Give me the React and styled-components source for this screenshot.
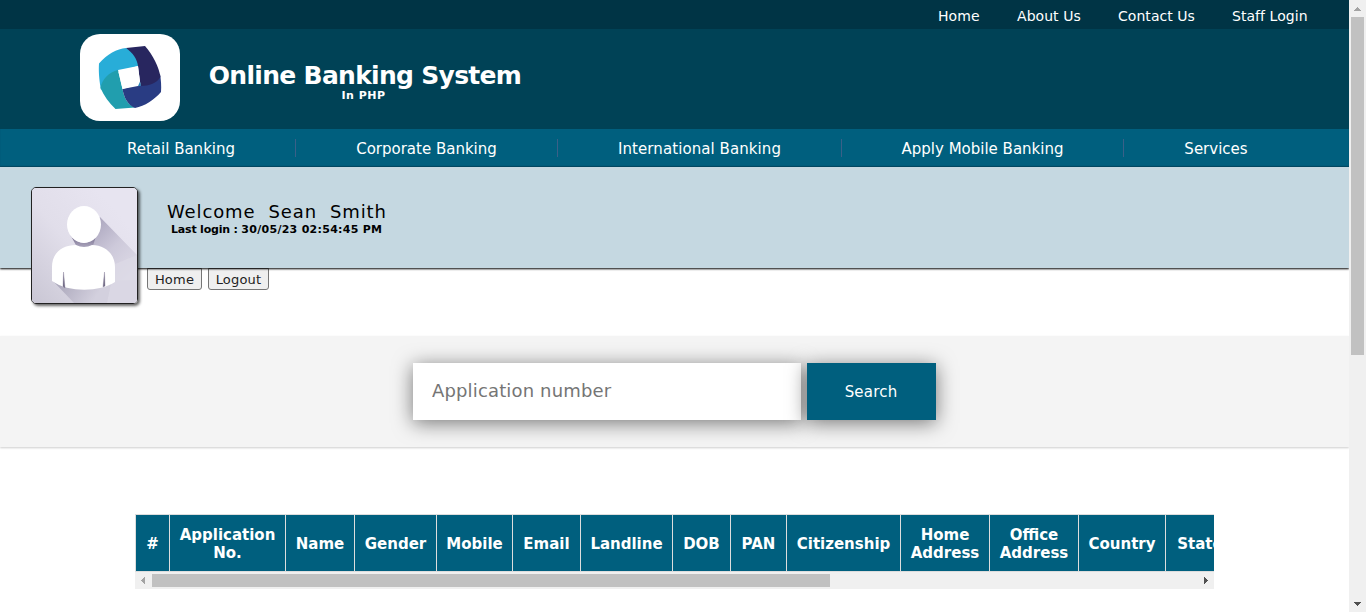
import React from 'react';
import styled, { createGlobalStyle } from 'styled-components';

const GlobalStyle = createGlobalStyle`
  * { box-sizing: border-box; }
  body {
    margin: 0;
    background: #fff;
    font-family: 'DejaVu Sans', Verdana, sans-serif;
    overflow: hidden;
  }
`;

const Shell = styled.div`
  display: flex;
  width: 1366px;
  height: 612px;
`;

const Page = styled.div`
  width: 1349px;
  height: 612px;
  overflow: hidden;
`;

const TopBar = styled.nav`
  display: flex;
  justify-content: flex-end;
  gap: 37px;
  height: 29px;
  padding-right: 41px;
  background: #003445;
`;

const TopLink = styled.a`
  color: #fff;
  font-size: 14px;
  line-height: 32px;
  width: ${(p) => p.$width}px;
  letter-spacing: 0.05px;
  white-space: nowrap;
`;

const Header = styled.header`
  display: flex;
  align-items: flex-start;
  height: 100px;
  padding: 5px 0 0 80px;
  background: #004256;
`;

const LogoTile = styled.div`
  width: 100px;
  height: 87px;
  border-radius: 20px;
  background: #fff;
`;

const Brand = styled.div`
  width: 314px;
  margin: 26px 0 0 28px;
  color: #fff;
  font-weight: bold;
  text-align: center;
`;

const BrandName = styled.div`
  font-size: 25px;
  line-height: 31px;
  letter-spacing: -0.7px;
  white-space: nowrap;
`;

const BrandSub = styled.div`
  padding-right: 3px;
  font-size: 11px;
  line-height: 10px;
  letter-spacing: 0.5px;
`;

const MainNav = styled.nav`
  display: flex;
  align-items: flex-start;
  height: 38px;
  padding: 10px 0 0 67px;
  background: #005f7e;
  box-shadow: inset 0 -1px 1px #004c68;
`;

const NavItem = styled.a`
  width: ${(p) => p.$width}px;
  height: 18px;
  border-right: ${(p) => (p.$last ? 'none' : '1px solid #3a6088')};
  color: #fff;
  font-size: 15px;
  line-height: 21px;
  letter-spacing: ${(p) => p.$spacing || 0}px;
  text-align: center;
  white-space: nowrap;
`;

const Welcome = styled.section`
  position: relative;
  z-index: 1;
  display: flex;
  align-items: flex-start;
  height: 101px;
  padding: 20px 0 0 31px;
  background: #c5d8e1;
  box-shadow: 0 1px 2px #000;
`;

const Avatar = styled.div`
  flex: none;
  width: 107px;
  height: 117px;
  border: 1px solid #222;
  border-radius: 5px;
  overflow: hidden;
  box-shadow: 2px 2px 3px rgba(0, 0, 0, 0.6);

  svg { display: block; }
`;

const Greeting = styled.div`
  margin: 14px 0 0 29px;
  color: #000;
`;

const GreetingName = styled.div`
  font-size: 18px;
  line-height: 22px;
  letter-spacing: 0.86px;
  white-space: pre;
`;

const LastLogin = styled.div`
  padding-left: 4px;
  font-size: 11px;
  font-weight: bold;
  line-height: 13px;
  letter-spacing: -0.2px;
`;

const LoginTime = styled.span`
  letter-spacing: 0.28px;
`;

const Actions = styled.div`
  display: flex;
  gap: 6px;
  height: 68px;
  padding-left: 147px;
`;

const ActionButton = styled.button`
  width: ${(p) => p.$width}px;
  height: 22px;
  padding: 0;
  border: 1px solid #767676;
  border-radius: 0 0 3px 3px;
  background: #efefef;
  color: #222;
  font-family: inherit;
  font-size: 13px;
  line-height: 21px;
  letter-spacing: 0.2px;
`;

const SearchBand = styled.form`
  display: flex;
  justify-content: center;
  gap: 6px;
  height: 111px;
  padding-top: 27px;
  background: #f4f4f4;
  box-shadow: 0 1px 2px rgba(0, 0, 0, 0.2);
`;

const SearchInput = styled.input`
  width: 388px;
  height: 57px;
  padding: 0 19px 3px;
  border: none;
  border-radius: 0;
  outline: none;
  background: #fff;
  box-shadow: 0 3px 20px rgba(0, 0, 0, 0.52);
  font-family: inherit;
  font-size: 18px;
  letter-spacing: 0.15px;

  &::placeholder { color: #757575; opacity: 1; }
`;

const SearchButton = styled.button`
  width: 129px;
  height: 57px;
  padding: 0 1px 0 0;
  border: none;
  background: #005f7e;
  box-shadow: 0 3px 20px rgba(0, 0, 0, 0.52);
  color: #fff;
  font-family: inherit;
  font-size: 15px;
  letter-spacing: 0.2px;
`;

const TableFrame = styled.div`
  width: 1079px;
  margin: 67px 0 0 135px;
  overflow: hidden;
`;

const Table = styled.table`
  width: 1100px;
  height: 58px;
  table-layout: fixed;
  border-collapse: separate;
  border-spacing: 0;
  border-left: 1px solid #ddd;
`;

const HeadCell = styled.th`
  width: ${(p) => p.$width}px;
  padding: 2px 0 0;
  border: 1px solid #ddd;
  border-left: none;
  background: #005f7e;
  color: #fff;
  font-size: 15px;
  line-height: 18px;
  text-align: center;
  white-space: pre;
`;

const HScroll = styled.div`
  display: flex;
  align-items: center;
  height: 17px;
  background: #f0f0f0;
`;

const HThumb = styled.div`
  width: 678px;
  height: 13px;
  margin-right: auto;
  background: #c1c1c1;
`;

const VScroll = styled.div`
  display: flex;
  flex-direction: column;
  align-items: center;
  width: 17px;
  height: 612px;
  background: #f0f0f0;
`;

const VThumb = styled.div`
  width: 13px;
  height: 338px;
  margin-bottom: auto;
  background: #c1c1c1;
`;

const arrowPaths = {
  up: 'M5 11h7v-1h-1v-1h-1v-1h-1v-1h-1v1h-1v1h-1v1h-1z',
  down: 'M5 7h7v1h-1v1h-1v1h-1v1h-1v-1h-1v-1h-1v-1h-1z',
  left: 'M10 5v7h-1v-1h-1v-1h-1v-1h-1v-1h1v-1h1v-1h1v-1z',
  right: 'M7 5v7h1v-1h1v-1h1v-1h1v-1h-1v-1h-1v-1h-1v-1z',
};

const Arrow = ({ direction, color }) => (
  <svg width="17" height="17" viewBox="0 0 17 17" shapeRendering="crispEdges">
    <path d={arrowPaths[direction]} fill={color} />
  </svg>
);

const Logo = () => (
  <svg width="100" height="87" viewBox="0 0 100 87">
    <path d="M19 29.500C27 20 37 15 46 14L58 20V32L38 38L21 56C19 45 18.500 37 19 29.500Z" fill="#28add8" />
    <path d="M20.500 54C22 45 29 38 38 36L42.500 55C44 64 48 71 55 73.500L35.500 75C29 69 24 62 20.500 54Z" fill="#219eae" />
    <path d="M81 58C74 66 65 72 55 74C48 71 44 64 42.500 55L60.500 50L80 40C81 46 81.500 52 81 58Z" fill="#293c83" />
    <path d="M46 14L65 12C73 21 79 33 80.500 43C77 49 69 52 60.500 52L58 32C57 25 53 19 46 14Z" fill="#28265f" />
    <path d="M38 36L58 32L60.500 51.500L42.500 55Z" fill="#fff" />
    <path d="M60 47.500L61 51.700L58 52.200Z" fill="#2581b8" />
  </svg>
);

const Portrait = () => (
  <svg width="105" height="115" viewBox="0 0 105 115">
    <defs>
      <linearGradient id="backdrop" x1="0" y1="1" x2="0.8" y2="0.2">
        <stop offset="0" stopColor="#c9c6d4" />
        <stop offset="0.55" stopColor="#e1deea" />
        <stop offset="1" stopColor="#e7e4f0" />
      </linearGradient>
      <linearGradient id="cast" gradientUnits="userSpaceOnUse" x1="60" y1="42" x2="103" y2="85">
        <stop offset="0" stopColor="#b0abc2" />
        <stop offset="0.45" stopColor="#cdc9da" />
        <stop offset="1" stopColor="#dedbe7" />
      </linearGradient>
      <linearGradient id="neck" x1="0" y1="0" x2="0" y2="1">
        <stop offset="0" stopColor="#766d8d" />
        <stop offset="1" stopColor="#b4afc5" />
      </linearGradient>
      <linearGradient id="base" gradientUnits="userSpaceOnUse" x1="25" y1="92" x2="60" y2="115">
        <stop offset="0" stopColor="#a9a5b9" />
        <stop offset="1" stopColor="#d3d0de" />
      </linearGradient>
    </defs>
    <rect width="105" height="115" fill="url(#backdrop)" />
    <path d="M68 29L105 67V115H60V54L38 48Z" fill="url(#cast)" />
    <path d="M21 93L42 115H105V92Z" fill="url(#base)" />
    <path d="M83 76L105 67V115H75Z" fill="#dcd9e5" opacity="0.75" />
    <path d="M39 48Q52 62 64 48L60 61H46Z" fill="url(#neck)" />
    <path d="M20 93V79C20 64 31 57 44 57Q52 61 60 57C73 57 83 66 83 79V94C68 104 37 105 20 93Z" fill="#fff" />
    <ellipse cx="52" cy="36.500" rx="17" ry="18.500" fill="#fff" />
    <path d="M31.500 84L33 100L31 98.500Z" fill="#665f7b" stroke="#8d87a0" strokeWidth="0.4" />
    <path d="M72.500 84L73 98L71 99Z" fill="#665f7b" stroke="#8d87a0" strokeWidth="0.4" />
  </svg>
);

const topLinks = [
  ['Home', 42],
  ['About Us', 64],
  ['Contact Us', 77],
  ['Staff Login', 76],
];

const navItems = [
  ['Retail Banking', 229],
  ['Corporate Banking', 262],
  ['International Banking', 284, 0.08],
  ['Apply Mobile Banking', 282],
  ['Services', 184],
];

const columns = [
  ['#', 34],
  ['Application\nNo.', 116],
  ['Name', 69],
  ['Gender', 82],
  ['Mobile', 76],
  ['Email', 68],
  ['Landline', 92],
  ['DOB', 58],
  ['PAN', 56],
  ['Citizenship', 114],
  ['Home\nAddress', 89],
  ['Office\nAddress', 89],
  ['Country', 87],
  ['State', 69],
];

export default function App() {
  return (
    <>
      <GlobalStyle />
      <Shell>
        <Page>
          <TopBar>
            {topLinks.map(([label, width]) => (
              <TopLink key={label} $width={width}>{label}</TopLink>
            ))}
          </TopBar>
          <Header>
            <LogoTile><Logo /></LogoTile>
            <Brand>
              <BrandName>Online Banking System</BrandName>
              <BrandSub>In PHP</BrandSub>
            </Brand>
          </Header>
          <MainNav>
            {navItems.map(([label, width, spacing], i) => (
              <NavItem key={label} $width={width} $spacing={spacing} $last={i === navItems.length - 1}>
                {label}
              </NavItem>
            ))}
          </MainNav>
          <Welcome>
            <Avatar><Portrait /></Avatar>
            <Greeting>
              <GreetingName>{'Welcome  Sean  Smith'}</GreetingName>
              <LastLogin>Last login : <LoginTime>30/05/23 02:54:45 PM</LoginTime></LastLogin>
            </Greeting>
          </Welcome>
          <Actions>
            <ActionButton $width={55}>Home</ActionButton>
            <ActionButton $width={61}>Logout</ActionButton>
          </Actions>
          <SearchBand onSubmit={(e) => e.preventDefault()}>
            <SearchInput placeholder="Application number" />
            <SearchButton>Search</SearchButton>
          </SearchBand>
          <TableFrame>
            <Table>
              <thead>
                <tr>
                  {columns.map(([label, width]) => (
                    <HeadCell key={label} $width={width}>{label}</HeadCell>
                  ))}
                </tr>
              </thead>
            </Table>
            <HScroll>
              <Arrow direction="left" color="#a3a3a3" />
              <HThumb />
              <Arrow direction="right" color="#505050" />
            </HScroll>
          </TableFrame>
        </Page>
        <VScroll>
          <Arrow direction="up" color="#a3a3a3" />
          <VThumb />
          <Arrow direction="down" color="#505050" />
        </VScroll>
      </Shell>
    </>
  );
}
